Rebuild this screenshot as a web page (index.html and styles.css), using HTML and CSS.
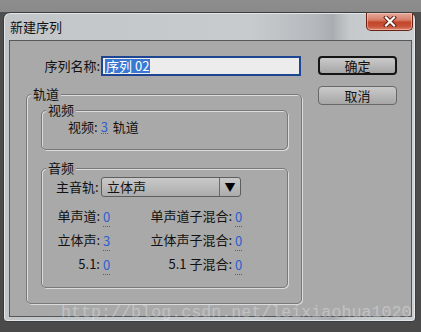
FILE: index.html
```html
<!DOCTYPE html>
<html>
<head>
  <title>新建序列</title>
  <link rel="stylesheet" href="styles.css">
</head>
<body>
  <div class="window">
    <div class="titlebar">
      <span class="title">新建序列</span>
      <div class="close-btn">
        <svg width="14" height="11" viewBox="0 0 14 11">
          <path d="M3 1.5 L11 9.5 M11 1.5 L3 9.5" stroke="#5a1a10" stroke-width="4" stroke-linecap="square"/>
          <path d="M3 1.5 L11 9.5 M11 1.5 L3 9.5" stroke="#ffffff" stroke-width="2.2" stroke-linecap="square"/>
        </svg>
      </div>
    </div>

    <div class="client">
      <div class="main-col">
        <div class="name-row">
          <span class="label">序列名称:</span>
          <div class="text-input"><span class="selected">序列 02</span></div>
        </div>

        <fieldset class="group outer-group">
          <legend>轨道</legend>
          <div class="group-body">
            <fieldset class="group">
              <legend>视频</legend>
              <div class="video-body">
                <span class="label">视频:</span>
                <span class="value">3</span>
                <span class="unit">轨道</span>
              </div>
            </fieldset>

            <fieldset class="group audio-group">
              <legend>音频</legend>
              <div class="audio-body">
                <div class="master-row">
                  <span class="label">主音轨:</span>
                  <div class="dropdown">
                    <span class="dropdown-text">立体声</span>
                    <span class="dropdown-arrow">&#9660;</span>
                  </div>
                </div>
                <div class="track-grid">
                  <span class="label">单声道:</span><span class="cell"><span class="value">0</span></span>
                  <span class="label">单声道子混合:</span><span class="cell"><span class="value">0</span></span>
                  <span class="label">立体声:</span><span class="cell"><span class="value">3</span></span>
                  <span class="label">立体声子混合:</span><span class="cell"><span class="value">0</span></span>
                  <span class="label">5.1:</span><span class="cell"><span class="value">0</span></span>
                  <span class="label">5.1 子混合:</span><span class="cell"><span class="value">0</span></span>
                </div>
              </div>
            </fieldset>
          </div>
        </fieldset>
      </div>

      <div class="btn-col">
        <button class="btn default-btn">确定</button>
        <button class="btn">取消</button>
      </div>
    </div>

    <div class="watermark">http://blog.csdn.net/leixiaohua1020</div>
  </div>
</body>
</html>
```

FILE: styles.css
```css
body {
  margin: 0;
  width: 421px;
  height: 332px;
  overflow: hidden;
  font-family: "Noto Sans CJK SC", "Liberation Sans", sans-serif;
  font-size: 13px;
  color: #111;
  background: linear-gradient(#8d8d8d 0, #8a8a8a 12px, #4e4e4e 12px, #4a4a4a 100%);
}
.window {
  position: relative;
  box-sizing: border-box;
  width: 413px;
  height: 310px;
  margin: 12px 0 0 3px;
  padding: 0 3px 4px 5px;
  border: 1px solid #3a3d40;
  border-radius: 7px 7px 4px 4px;
  background: linear-gradient(90deg, #c3c6c9 0%, #c8cbce 60%, #b4b8bc 76%, #a9adb1 80%, #c6c9cc 84%, #cdd0d3 100%);
  box-shadow: inset 0 0 0 1px #e4e6e8;
}
.titlebar {
  display: flex;
  justify-content: space-between;
  align-items: flex-start;
  height: 27px;
}
.title {
  padding: 6px 0 0 1px;
  line-height: 16px;
  font-size: 13px;
  color: #101010;
}
.close-btn {
  display: flex;
  justify-content: center;
  align-items: center;
  box-sizing: border-box;
  width: 47px;
  height: 18px;
  margin-right: -1px;
  border: 1px solid #6a2214;
  border-top: none;
  border-radius: 0 0 5px 5px;
  background: linear-gradient(#e7ab9c 0%, #d7806b 40%, #c2452a 55%, #c9553a 80%, #dc8a72 100%);
  box-shadow: inset 0 0 0 1px rgba(255,210,200,0.5);
}
.client {
  display: flex;
  gap: 16px;
  box-sizing: border-box;
  height: 277px;
  padding: 15px 14px 0 16px;
  border: 1px solid #55585b;
  background-color: #a9a9a9;
}
.main-col {
  width: 276px;
}
.name-row {
  display: flex;
  justify-content: flex-end;
  align-items: center;
  height: 19px;
}
.label {
  line-height: 16px;
}
.text-input {
  box-sizing: border-box;
  width: 200px;
  height: 20px;
  margin: 0 1px 0 1px;
  padding: 1px 0 0 2px;
  border: 2px solid #1d4591;
  background-color: #ececec;
  line-height: 14px;
}
.selected {
  display: inline-block;
  padding: 0 1px;
  background-color: #3a78d4;
  color: #fff;
}
.group {
  margin: 0;
  padding: 0;
  border: 1px solid #777a7c;
  border-radius: 5px;
  box-shadow: inset 1px 1px 0 #dcdcdc, 1px 1px 0 #dcdcdc;
  min-width: 0;
}
.group legend {
  margin-left: 4px;
  padding: 0 2px;
  line-height: 16px;
  background-color: #a9a9a9;
}
.outer-group {
  margin-top: 11px;
}
.group-body {
  padding: 0 13px 15px 14px;
}
.video-body {
  display: flex;
  align-items: center;
  padding: 1px 0 14px 26px;
  line-height: 16px;
}
.value {
  color: #2c5fd0;
  border-bottom: 1px dotted #2c5fd0;
  line-height: 13px;
}
.video-body .value {
  margin-left: 3px;
}
.unit {
  margin-left: 5px;
}
.audio-group {
  margin-top: 10px;
}
.audio-body {
  padding: 1px 0 11px 14px;
}
.master-row {
  display: flex;
  align-items: center;
  height: 20px;
}
.master-row .label {
  width: 44px;
}
.dropdown {
  display: flex;
  box-sizing: border-box;
  width: 140px;
  height: 20px;
  margin-left: 1px;
  border: 1px solid #5e5e5e;
  border-radius: 3px;
  background: linear-gradient(#c9c9c9, #acacac);
}
.dropdown-text {
  flex-grow: 1;
  padding-left: 5px;
  line-height: 18px;
}
.dropdown-arrow {
  width: 20px;
  border-left: 1px solid #6a6a6a;
  text-align: center;
  font-size: 11px;
  line-height: 18px;
  color: #000;
}
.track-grid {
  display: grid;
  grid-template-columns: 44px 48px 84px auto;
  grid-auto-rows: 24px;
  align-items: center;
  margin-top: 7px;
}
.track-grid .label {
  text-align: right;
  white-space: nowrap;
}
.cell {
  padding-left: 3px;
}
.btn-col {
  display: flex;
  flex-direction: column;
  gap: 11px;
}
.btn {
  box-sizing: border-box;
  width: 79px;
  height: 19px;
  padding: 0;
  border: 1px solid #686868;
  border-radius: 4px;
  background: linear-gradient(#cacaca, #a6a6a6);
  font-family: "Noto Sans CJK SC", sans-serif;
  font-size: 13px;
  line-height: 15px;
  color: #111;
}
.default-btn {
  border: 2px solid #151515;
}
.watermark {
  position: absolute;
  left: 57px;
  top: 290px;
  font-family: "Liberation Mono", monospace;
  font-size: 16.7px;
  line-height: 20px;
  color: rgba(255,255,255,0.3);
  white-space: nowrap;
}
```
